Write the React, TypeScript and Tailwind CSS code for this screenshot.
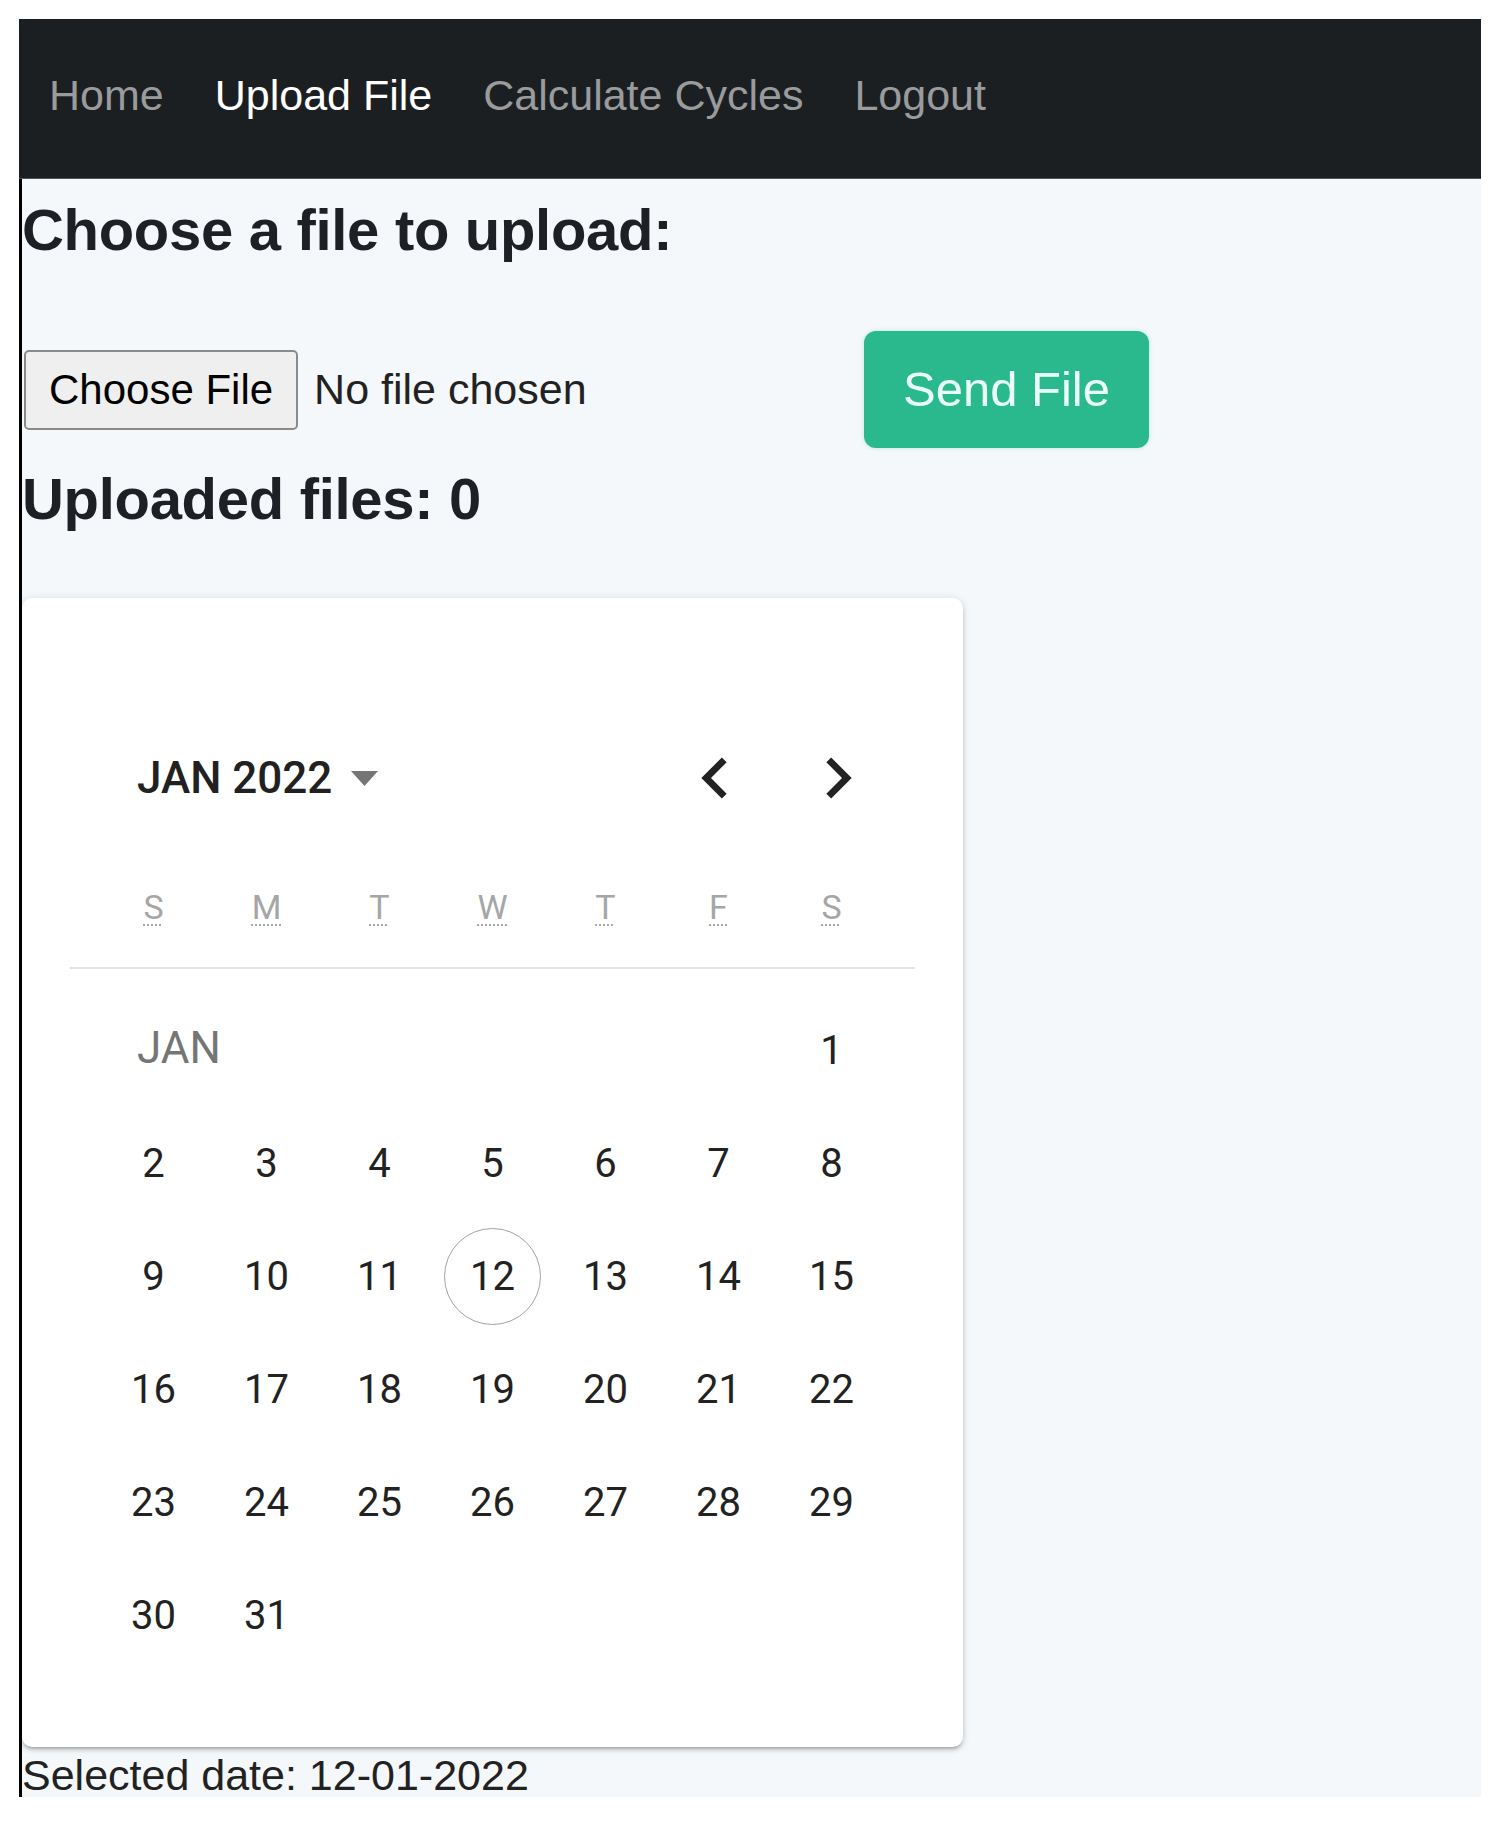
const navItems = [
  { label: 'Home', active: false },
  { label: 'Upload File', active: true },
  { label: 'Calculate Cycles', active: false },
  { label: 'Logout', active: false },
]

const weekDays = ['S', 'M', 'T', 'W', 'T', 'F', 'S']

const sans = "font-['Liberation_Sans',Arial,sans-serif]"
const roboto = "font-['Roboto','Noto_Sans',sans-serif]"

function ChevronLeft() {
  return (
    <svg viewBox="0 0 24 24" className="w-[82px] h-[82px] fill-[#222]">
      <path d="M15.41 7.41 14 6l-6 6 6 6 1.41-1.41L10.83 12z" />
    </svg>
  )
}

function ChevronRight() {
  return (
    <svg viewBox="0 0 24 24" className="w-[82px] h-[82px] fill-[#222]">
      <path d="M10 6 8.59 7.41 13.17 12l-4.58 4.59L10 18l6-6z" />
    </svg>
  )
}

function Day({ n, selected }: { n: number; selected?: boolean }) {
  return (
    <div className="flex items-center justify-center">
      <div
        className={
          'w-[97px] h-[97px] rounded-full flex items-center justify-center text-[40px] text-[#222] ' +
          (selected ? 'border border-[#a3a3a3]' : '')
        }
      >
        {n}
      </div>
    </div>
  )
}

function Calendar() {
  const days: number[] = []
  for (let d = 2; d <= 31; d++) days.push(d)

  return (
    <div className={`w-[941px] h-[1149px] bg-white rounded-[10px] shadow-[0_3px_3px_-2px_rgba(0,0,0,0.2),0_3px_4px_0_rgba(0,0,0,0.14),0_1px_8px_0_rgba(0,0,0,0.12)] px-[48px] pt-[139px] ${roboto}`}>
      <div className="h-[82px] flex items-center justify-between pl-[67px] pr-[36px]">
        <div className="flex items-center gap-[19px]">
          <span className="text-[44px] font-medium text-[#212121] leading-none">JAN 2022</span>
          <svg viewBox="0 0 27 15" className="w-[27px] h-[15px] fill-[#757575]">
            <path d="M0 0h27L13.5 15z" />
          </svg>
        </div>
        <div className="flex items-center gap-[41px]">
          <ChevronLeft />
          <ChevronRight />
        </div>
      </div>

      <div className="mt-[41px] h-[94px] grid grid-cols-[repeat(7,113px)] justify-center items-center">
        {weekDays.map((d, i) => (
          <div key={i} className="text-center text-[34px] text-[#a6a6a6] leading-none">
            <abbr className="underline decoration-dotted underline-offset-[5px] decoration-[2px] no-underline-skip">{d}</abbr>
          </div>
        ))}
      </div>

      <div className="mt-[13px] h-[2px] bg-[#e3e3e3]" />

      <div className="mt-[25px] grid grid-cols-[repeat(7,113px)] auto-rows-[113px] justify-center">
        <div className="col-span-6 flex items-center pl-[40px] text-[44px] text-[#757575] pb-[6px]">JAN</div>
        <Day n={1} />
        {days.map((d) => (
          <Day key={d} n={d} selected={d === 12} />
        ))}
      </div>
    </div>
  )
}

export default function App() {
  return (
    <div className="bg-white pt-[19px] pb-[24px] pl-[19px] w-[1501px]">
      <div className="w-[1462px] h-[1778px] overflow-hidden flex flex-col">
        <nav className={`h-[160px] shrink-0 bg-[#1c1f22] border-b border-[#50545a] flex items-center pl-[30px] pb-[6px] gap-[51px] ${sans}`}>
          {navItems.map((item) => (
            <a
              key={item.label}
              className={'text-[43px] leading-none ' + (item.active ? 'text-white' : 'text-[#999b9d]')}
            >
              {item.label}
            </a>
          ))}
        </nav>

        <div className={`flex-1 bg-[#f5f8fa] border-l-[3px] border-black text-[#1d2125] ${sans}`}>
          <h3 className="mt-[16px] text-[58px] font-bold leading-[70px] tracking-[-0.3px]">Choose a file to upload:</h3>

          <div className="mt-[66px] flex items-center">
            <div className="w-[842px] flex items-center">
              <button className="ml-[2px] h-[80px] px-[23px] bg-[#efefef] border-2 border-[#8a8a8a] rounded-[5px] text-[42px] text-black leading-none">
                Choose File
              </button>
              <span className="ml-[16px] text-[43px] text-[#222]">No file chosen</span>
            </div>
            <button className="w-[285px] h-[117px] rounded-[12px] bg-[#29b98c] text-[#eafff6] text-[49px] leading-none shadow-[0_0_4px_rgba(41,185,140,0.3)]">
              Send File
            </button>
          </div>

          <h3 className="mt-[16px] text-[58px] font-bold leading-[70px] tracking-[-0.3px]">Uploaded files: 0</h3>

          <div className="mt-[64px]">
            <Calendar />
          </div>

          <p className="mt-[4px] text-[43px] leading-[1.15] text-[#222]">Selected date: 12-01-2022</p>
        </div>
      </div>
    </div>
  )
}
